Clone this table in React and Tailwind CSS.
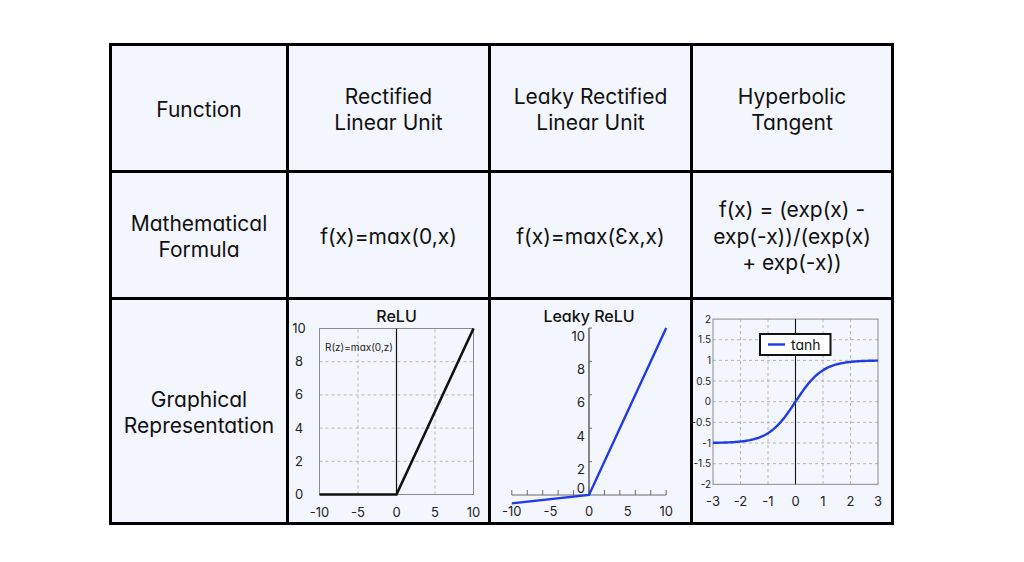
import React from "react";

const gridStroke = "#b5b5b5";

function ReluChart() {
  const X = (v) => 107.5 + v * 7.7;
  const Y = (v) => 194.5 - v * 16.6;
  return (
    <svg width="199" height="222" viewBox="0 0 199 222" className="block">
      <text x="107.5" y="21.5" textAnchor="middle" fontSize="16" fontWeight="500" fill="#111">ReLU</text>
      {[-5, 5].map((v) => (
        <line key={"gx" + v} x1={X(v)} x2={X(v)} y1={Y(0)} y2={Y(10)} stroke={gridStroke} strokeDasharray="3 3" strokeWidth="1" />
      ))}
      {[2, 4, 6, 8].map((v) => (
        <line key={"gy" + v} x1={X(-10)} x2={X(10)} y1={Y(v)} y2={Y(v)} stroke={gridStroke} strokeDasharray="3 3" strokeWidth="1" />
      ))}
      <rect x={X(-10)} y={Y(10)} width={X(10) - X(-10)} height={Y(0) - Y(10)} fill="none" stroke="#8a8a8a" strokeWidth="1" />
      <line x1={X(0)} x2={X(0)} y1={Y(0)} y2={Y(10)} stroke="#111" strokeWidth="1.2" />
      <polyline points={`${X(-10)},${Y(0)} ${X(0)},${Y(0)} ${X(10)},${Y(10)}`} fill="none" stroke="#111" strokeWidth="2.6" />
      <text x="36" y="51" fontSize="10" fill="#222">R(z)=max(0,z)</text>
      {[0, 2, 4, 6, 8, 10].map((v) => (
        <text key={"ly" + v} x="10" y={Y(v) + 4.5} textAnchor="middle" fontSize="13" fill="#222">{v}</text>
      ))}
      {[-10, -5, 0, 5, 10].map((v) => (
        <text key={"lx" + v} x={X(v)} y="216.5" textAnchor="middle" fontSize="13" fill="#222">{v}</text>
      ))}
    </svg>
  );
}

function LeakyChart() {
  const X = (v) => 98 + v * 7.72;
  const Y = (v) => 195 - v * 16.7;
  const xt = [-10, -8, -6, -4, -2, 0, 2, 4, 6, 8, 10];
  return (
    <svg width="199" height="222" viewBox="0 0 199 222" className="block">
      <text x="98" y="21.5" textAnchor="middle" fontSize="16" fontWeight="500" fill="#111">Leaky ReLU</text>
      <line x1={X(0)} x2={X(0)} y1={Y(0)} y2={Y(10)} stroke="#6b6b6b" strokeWidth="1.6" />
      <line x1={X(-10)} x2={X(10)} y1={Y(0)} y2={Y(0)} stroke="#6b6b6b" strokeWidth="1.2" />
      {xt.map((v) => (
        <line key={"tx" + v} x1={X(v)} x2={X(v)} y1={Y(0)} y2={Y(0) - 5} stroke="#6b6b6b" strokeWidth="1" />
      ))}
      {[2, 4, 6, 8, 10].map((v) => (
        <line key={"ty" + v} x1={X(0)} x2={X(0) + 3} y1={Y(v)} y2={Y(v)} stroke="#6b6b6b" strokeWidth="1" />
      ))}
      <polyline points={`${X(-10)},${Y(-0.5)} ${X(0)},${Y(0)} ${X(10)},${Y(10)}`} fill="none" stroke="#1f3ae6" strokeWidth="2.4" />
      {[10, 8, 6, 4, 2].map((v) => (
        <text key={"ly" + v} x="94" y={Y(v) + 12.5} textAnchor="end" fontSize="13" fill="#222">{v}</text>
      ))}
      <text x="94" y={192.5} textAnchor="end" fontSize="13" fill="#222">0</text>
      {[-10, -5, 0, 5, 10].map((v) => (
        <text key={"lx" + v} x={X(v)} y="216" textAnchor="middle" fontSize="13" fill="#222">{v}</text>
      ))}
    </svg>
  );
}

function TanhChart() {
  const X = (v) => 102.5 + v * 27.5;
  const Y = (v) => 101.7 - v * 41.3;
  const pts = [];
  for (let i = 0; i <= 120; i++) {
    const x = -3 + (6 * i) / 120;
    pts.push(`${X(x).toFixed(2)},${Y(Math.tanh(x)).toFixed(2)}`);
  }
  const ys = [2, 1.5, 1, 0.5, 0, -0.5, -1, -1.5, -2];
  return (
    <svg width="198" height="222" viewBox="0 0 198 222" className="block">
      {[-2, -1, 1, 2].map((v) => (
        <line key={"gx" + v} x1={X(v)} x2={X(v)} y1={Y(2)} y2={Y(-2)} stroke={gridStroke} strokeDasharray="3 3" strokeWidth="1" />
      ))}
      {[1.5, 1, 0.5, 0, -0.5, -1, -1.5].map((v) => (
        <line key={"gy" + v} x1={X(-3)} x2={X(3)} y1={Y(v)} y2={Y(v)} stroke={gridStroke} strokeDasharray="3 3" strokeWidth="1" />
      ))}
      <rect x={X(-3)} y={Y(2)} width={X(3) - X(-3)} height={Y(-2) - Y(2)} fill="none" stroke="#8a8a8a" strokeWidth="1" />
      <line x1={X(0)} x2={X(0)} y1={Y(2)} y2={Y(-2)} stroke="#111" strokeWidth="1.1" />
      <polyline points={pts.join(" ")} fill="none" stroke="#1f3ae6" strokeWidth="2.4" />
      <rect x="67" y="34" width="70.5" height="21" fill="#ffffff" stroke="#111" strokeWidth="2" />
      <line x1="75" x2="92" y1="44.5" y2="44.5" stroke="#1f3ae6" strokeWidth="2.4" />
      <text x="98" y="49.5" fontSize="14" fill="#111">tanh</text>
      {ys.map((v) => (
        <text key={"ly" + v} x="18" y={Y(v) + 3.5} textAnchor="end" fontSize="10" fill="#222">{String(v)}</text>
      ))}
      {[-3, -2, -1, 0, 1, 2, 3].map((v) => (
        <text key={"lx" + v} x={X(v)} y="205.5" textAnchor="middle" fontSize="13" fill="#222">{v}</text>
      ))}
    </svg>
  );
}

function Cell({ children }) {
  return (
    <div className="bg-[#f3f6fc] flex items-center justify-center pt-[4px] text-center text-[21px] leading-[26.5px] font-normal text-[#111]">
      {children}
    </div>
  );
}

export default function App() {
  return (
    <div className="w-[1024px] h-[562px] bg-white pl-[109px] pt-[43px] font-['Inter',sans-serif] [font-feature-settings:'cv11']">
      <div className="grid grid-cols-[174px_199px_199px_198px] grid-rows-[124px_124px_222px] gap-[3px] bg-black p-[3px] w-fit">
        <Cell>Function</Cell>
        <Cell>Rectified<br />Linear Unit</Cell>
        <Cell>Leaky Rectified<br />Linear Unit</Cell>
        <Cell>Hyperbolic<br />Tangent</Cell>

        <Cell>Mathematical<br />Formula</Cell>
        <Cell>f(x)=max(0,x)</Cell>
        <Cell>f(x)=max(Ɛx,x)</Cell>
        <Cell>f(x) = (exp(x) -<br />exp(-x))/(exp(x)<br />+ exp(-x))</Cell>

        <Cell>Graphical<br />Representation</Cell>
        <div className="bg-[#f3f6fc]"><ReluChart /></div>
        <div className="bg-[#f3f6fc]"><LeakyChart /></div>
        <div className="bg-[#f3f6fc]"><TanhChart /></div>
      </div>
    </div>
  );
}
